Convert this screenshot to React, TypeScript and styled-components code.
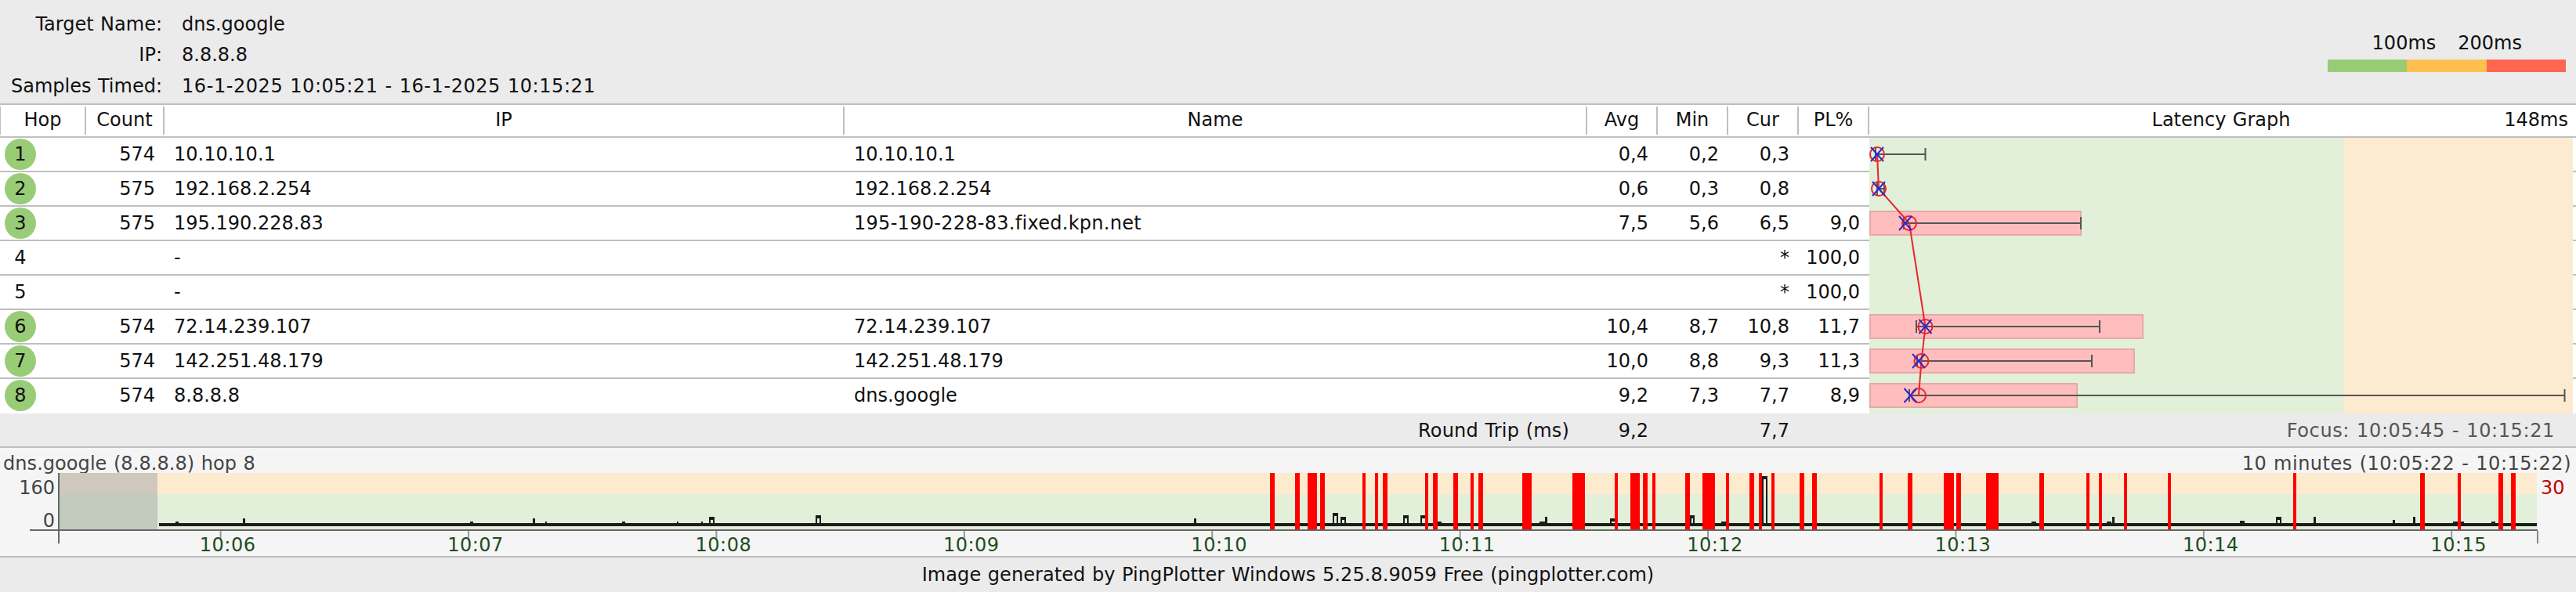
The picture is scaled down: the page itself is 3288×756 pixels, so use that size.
import styled, { createGlobalStyle } from 'styled-components'

const LINE = '#bfbfbf'
const COLUMNS = '110px 100px 868px 948px 90px 90px 90px 90px'

interface Hop {
  hop: number
  count?: string
  ip: string
  name?: string
  avg?: string
  min?: string
  cur?: string
  pl?: string
}

const hops: Hop[] = [
  { hop: 1, count: '574', ip: '10.10.10.1', name: '10.10.10.1', avg: '0,4', min: '0,2', cur: '0,3' },
  { hop: 2, count: '575', ip: '192.168.2.254', name: '192.168.2.254', avg: '0,6', min: '0,3', cur: '0,8' },
  { hop: 3, count: '575', ip: '195.190.228.83', name: '195-190-228-83.fixed.kpn.net', avg: '7,5', min: '5,6', cur: '6,5', pl: '9,0' },
  { hop: 4, ip: '-', cur: '*', pl: '100,0' },
  { hop: 5, ip: '-', cur: '*', pl: '100,0' },
  { hop: 6, count: '574', ip: '72.14.239.107', name: '72.14.239.107', avg: '10,4', min: '8,7', cur: '10,8', pl: '11,7' },
  { hop: 7, count: '574', ip: '142.251.48.179', name: '142.251.48.179', avg: '10,0', min: '8,8', cur: '9,3', pl: '11,3' },
  { hop: 8, count: '574', ip: '8.8.8.8', name: 'dns.google', avg: '9,2', min: '7,3', cur: '7,7', pl: '8,9' },
]

// latency graph marks, page coordinates (viewBox keeps them as measured)
const marks = [
  { y: 197, cur: 2396, avg: 2396, minX: 2394, maxX: 2457.5, barEnd: 0 },
  { y: 241, cur: 2398, avg: 2398, minX: 2396, maxX: 2405, barEnd: 0 },
  { y: 285, cur: 2437, avg: 2432, minX: 2430, maxX: 2656, barEnd: 2656 },
  { y: 417, cur: 2457.5, avg: 2457.5, minX: 2446, maxX: 2680, barEnd: 2735 },
  { y: 461, cur: 2452.5, avg: 2449, minX: 2447, maxX: 2670, barEnd: 2724 },
  { y: 505, cur: 2449, avg: 2438.5, minX: 2437, maxX: 3273.5, barEnd: 2651 },
]

const lossBars = [
  [1621, 1627], [1653, 1659], [1669, 1681], [1685, 1691], [1739, 1743], [1755, 1759], [1765, 1771],
  [1819, 1823], [1829, 1835], [1855, 1861], [1877, 1881], [1887, 1893], [1943, 1955], [2007, 2023],
  [2061, 2065], [2081, 2093], [2097, 2103], [2109, 2113], [2151, 2157], [2173, 2189], [2203, 2207],
  [2233, 2239], [2245, 2249], [2261, 2265], [2297, 2303], [2313, 2319], [2399, 2403], [2435, 2441],
  [2481, 2494], [2497, 2503], [2535, 2551], [2603, 2609], [2663, 2667], [2679, 2683], [2711, 2715],
  [2767, 2771], [2927, 2931], [3089, 3095], [3137, 3141], [3189, 3195], [3205, 3211],
]

// small solid blips on the sample line: x, top, width
const blips = [
  [224, 668, 4], [310, 664, 3], [600, 668, 4], [680, 664, 3], [696, 668, 2], [794, 668, 4], [864, 668, 2],
  [895, 668, 2], [1524, 664, 3], [1835, 668, 5], [1965, 668, 8], [1972, 662, 3], [2197, 668, 6], [2593, 668, 6],
  [2689, 668, 6], [2696, 662, 3], [2859, 667, 6], [2953, 662, 3], [3054, 666, 3], [3080, 662, 3], [3131, 668, 6],
  [3141, 668, 4], [3180, 668, 5],
]

// open samples that rise off the line and come back: x, top, width
const peaks = [
  [906, 662, 5], [1042, 660, 5], [1702, 657, 5], [1712, 662, 5], [1792, 660, 5], [1814, 660, 6], [2056, 664, 6],
  [2158, 660, 4], [2250, 610, 5], [2906, 662, 5],
]

const minuteTicks = [6, 7, 8, 9, 10, 11, 12, 13, 14, 15].map((m, i) => ({
  label: `10:${String(m).padStart(2, '0')}`,
  x: 280.6 + i * 316.4,
}))

const GlobalStyle = createGlobalStyle`
  html, body {
    margin: 0;
    padding: 0;
    background: #ebebeb;
  }
  body {
    font-family: "DejaVu Sans", Verdana, sans-serif;
    font-size: 24px;
    word-spacing: 0.8px;
    color: #111;
  }
`

const Page = styled.div`
  width: 3288px;
  height: 756px;
  display: flex;
  flex-direction: column;
  overflow: hidden;
  background: #ebebeb;
`

const Summary = styled.header`
  height: 132px;
  display: flex;
  justify-content: space-between;
`

const InfoGrid = styled.dl`
  margin: 11px 0 0;
  display: grid;
  grid-template-columns: 207px auto;
  grid-auto-rows: 39.5px;
  column-gap: 25px;
  align-items: center;
  align-content: start;
`

const InfoLabel = styled.dt`
  text-align: right;
  white-space: nowrap;
`

const InfoValue = styled.dd<{ $stamp?: boolean }>`
  margin: 0;
  white-space: nowrap;
  letter-spacing: ${p => (p.$stamp ? '0.56px' : '0')};
`

const Legend = styled.div`
  width: 304px;
  margin: 40px 13px 0 0;
`

const LegendLabels = styled.div`
  display: flex;
  justify-content: flex-end;
  gap: 28px;
  height: 36px;
  padding-right: 56px;
  line-height: 30px;
`

const LegendBar = styled.div`
  display: flex;
  height: 16px;
`

const LegendStep = styled.span<{ $color: string }>`
  flex: 1;
  background: ${p => p.$color};
`

const HeadRow = styled.div`
  height: 40px;
  display: grid;
  grid-template-columns: ${COLUMNS} 1fr;
  align-items: center;
  background: #fff;
  border-top: 2px solid ${LINE};
  border-bottom: 2px solid ${LINE};
`

const HeadCell = styled.div<{ $first?: boolean; $last?: boolean }>`
  position: relative;
  height: 36px;
  line-height: 34px;
  text-align: center;
  border-right: ${p => (p.$last ? 'none' : `2px solid ${LINE}`)};
  border-left: ${p => (p.$first ? `1px solid ${LINE}` : 'none')};
  padding-right: ${p => (p.$last ? '4px' : '0')};
  box-sizing: border-box;
`

const ScaleMax = styled.span`
  position: absolute;
  right: 10px;
  top: 0;
`

const Body = styled.div`
  position: relative;
  height: 352px;
  background: #fff;
`

const Row = styled.div<{ $last?: boolean }>`
  height: 42px;
  display: grid;
  grid-template-columns: ${COLUMNS};
  align-items: center;
  padding-bottom: ${p => (p.$last ? '2px' : '0')};
  border-bottom: ${p => (p.$last ? 'none' : `2px solid ${LINE}`)};
`

const HopCell = styled.div`
  width: 40px;
  height: 40px;
  margin-left: 6px;
  display: flex;
  align-items: center;
  justify-content: center;
`

const HopDot = styled(HopCell)`
  border-radius: 50%;
  background: #99cc77;
`

const Num = styled.div`
  padding-right: 12px;
  text-align: right;
  white-space: nowrap;
`

const Text = styled.div<{ $hyphened?: boolean }>`
  padding-left: 12px;
  white-space: nowrap;
  letter-spacing: ${p => (p.$hyphened ? '0.28px' : '0')};
`

const LatencyChart = styled.svg`
  position: absolute;
  left: 2386px;
  top: 0;
  display: block;
`

const TotalRow = styled.div`
  height: 40px;
  padding-top: 2px;
  display: grid;
  grid-template-columns: 2026px 90px 90px 90px 90px 1fr;
  align-items: center;
  border-bottom: 2px solid ${LINE};
`

const TotalLabel = styled.div`
  padding-right: 23px;
  text-align: right;
  letter-spacing: 0.18px;
`

const Focus = styled.div`
  padding-right: 27px;
  text-align: right;
  color: #555;
  white-space: nowrap;
  letter-spacing: 0.62px;
`

const Timeline = styled.section`
  height: 138px;
  background: #f5f5f5;
  border-bottom: 2px solid ${LINE};
`

const TimelineTitle = styled.div`
  height: 32px;
  box-sizing: border-box;
  padding: 8px 6px 0 4px;
  display: flex;
  justify-content: space-between;
  align-items: center;
  color: #444;
`

const TitleSide = styled.span<{ $spacing?: string }>`
  letter-spacing: ${p => p.$spacing ?? '0'};
  white-space: nowrap;
`

const TimelineChart = styled.svg`
  display: block;
`

const AxisText = styled.text<{ $color?: string }>`
  font-family: "DejaVu Sans", Verdana, sans-serif;
  font-size: 24px;
  fill: ${p => p.$color ?? '#444'};
  dominant-baseline: central;
`

const Footer = styled.footer`
  flex: 1;
  display: flex;
  align-items: center;
  justify-content: center;
  letter-spacing: 0.08px;
`

function LatencyGraph() {
  return (
    <LatencyChart width={902} height={352} viewBox="2386 176 902 352">
      <rect x={2386} y={176} width={605} height={352} fill="#e2efd9" />
      <rect x={2991} y={176} width={293} height={352} fill="#fdebd0" />
      {[218, 262, 306, 350, 394, 438, 482].map(y => (
        <rect key={y} x={3284} y={y} width={4} height={2} fill={LINE} />
      ))}
      {marks.filter(m => m.barEnd > 0).map(m => (
        <rect key={m.y} x={2387} y={m.y - 15} width={m.barEnd - 2387} height={30} fill="#ffbdbd" stroke="#e6a9a9" strokeWidth={2} />
      ))}
      {marks.map(m => (
        <g key={m.y} stroke="#555" strokeWidth={2}>
          <line x1={m.minX} y1={m.y} x2={m.maxX} y2={m.y} />
          <line x1={m.minX} y1={m.y - 8} x2={m.minX} y2={m.y + 8} />
          <line x1={m.maxX} y1={m.y - 8} x2={m.maxX} y2={m.y + 8} />
        </g>
      ))}
      <polyline points={marks.map(m => `${m.cur},${m.y}`).join(' ')} fill="none" stroke="#e8262a" strokeWidth={2} />
      {marks.map(m => (
        <g key={m.y} fill="none">
          <circle cx={m.cur} cy={m.y} r={9} stroke="#e8262a" strokeWidth={2} />
          <path d={`M${m.avg - 8} ${m.y - 9}L${m.avg + 8} ${m.y + 9}M${m.avg + 8} ${m.y - 9}L${m.avg - 8} ${m.y + 9}`} stroke="#2a2acc" strokeWidth={2} />
        </g>
      ))}
    </LatencyChart>
  )
}

function TimelineGraph() {
  return (
    <TimelineChart width={3288} height={106} viewBox="0 606 3288 106">
      <rect x={75} y={606} width={3163} height={27} fill="#fdebd0" />
      <rect x={75} y={633} width={3163} height={45} fill="#e2efd9" />
      <rect x={75} y={606} width={126} height={27} fill="#cfc8bd" />
      <rect x={75} y={633} width={126} height={45} fill="#c3cbbf" />
      <rect x={203} y={670} width={3035} height={4} fill="#1c1c1c" />
      {blips.map(([x, top, w]) => (
        <rect key={x} x={x} y={top} width={w} height={670 - top} fill="#1c1c1c" />
      ))}
      {peaks.map(([x, top, w]) => (
        <g key={x}>
          <path d={`M${x} 671V${top + 1}H${x + w}V671`} fill="none" stroke="#1c1c1c" strokeWidth={2} />
          <rect x={x - 1} y={top} width={w + 2} height={4} fill="#1c1c1c" />
        </g>
      ))}
      {lossBars.map(([a, b]) => (
        <rect key={a} x={a} y={606} width={b - a} height={72} fill="#ff0000" />
      ))}
      <rect x={38} y={678} width={3201} height={2} fill="#666" />
      <rect x={74} y={606} width={2} height={90} fill="#666" />
      <rect x={3238} y={680} width={2} height={16} fill="#888" />
      {minuteTicks.map(t => (
        <g key={t.label}>
          <rect x={t.x} y={680} width={2} height={9} fill="#999" />
          <AxisText x={t.x + 10} y={698} textAnchor="middle" $color="#1e4d1e" letterSpacing={0.5}>{t.label}</AxisText>
        </g>
      ))}
      <AxisText x={70} y={625} textAnchor="end">160</AxisText>
      <AxisText x={70} y={667} textAnchor="end">0</AxisText>
      <AxisText x={3243} y={625} $color="#c00000">30</AxisText>
    </TimelineChart>
  )
}

export default function App() {
  return (
    <Page>
      <GlobalStyle />
      <Summary>
        <InfoGrid>
          <InfoLabel>Target Name:</InfoLabel>
          <InfoValue>dns.google</InfoValue>
          <InfoLabel>IP:</InfoLabel>
          <InfoValue>8.8.8.8</InfoValue>
          <InfoLabel>Samples Timed:</InfoLabel>
          <InfoValue $stamp>16-1-2025 10:05:21 - 16-1-2025 10:15:21</InfoValue>
        </InfoGrid>
        <Legend>
          <LegendLabels>
            <span>100ms</span>
            <span>200ms</span>
          </LegendLabels>
          <LegendBar>
            <LegendStep $color="#99cc77" />
            <LegendStep $color="#ffc050" />
            <LegendStep $color="#ff6650" />
          </LegendBar>
        </Legend>
      </Summary>

      <HeadRow>
        <HeadCell $first>Hop</HeadCell>
        <HeadCell>Count</HeadCell>
        <HeadCell>IP</HeadCell>
        <HeadCell>Name</HeadCell>
        <HeadCell>Avg</HeadCell>
        <HeadCell>Min</HeadCell>
        <HeadCell>Cur</HeadCell>
        <HeadCell>PL%</HeadCell>
        <HeadCell $last>
          Latency Graph
          <ScaleMax>148ms</ScaleMax>
        </HeadCell>
      </HeadRow>

      <Body>
        {hops.map((h, i) => (
          <Row key={h.hop} $last={i === hops.length - 1}>
            {h.count ? <HopDot>{h.hop}</HopDot> : <HopCell>{h.hop}</HopCell>}
            <Num>{h.count}</Num>
            <Text>{h.ip}</Text>
            <Text $hyphened={h.name?.includes('-')}>{h.name}</Text>
            <Num>{h.avg}</Num>
            <Num>{h.min}</Num>
            <Num>{h.cur}</Num>
            <Num>{h.pl}</Num>
          </Row>
        ))}
        <LatencyGraph />
      </Body>

      <TotalRow>
        <TotalLabel>Round Trip (ms)</TotalLabel>
        <Num>9,2</Num>
        <Num />
        <Num>7,7</Num>
        <Num />
        <Focus>Focus: 10:05:45 - 10:15:21</Focus>
      </TotalRow>

      <Timeline>
        <TimelineTitle>
          <TitleSide $spacing="0.06px">dns.google (8.8.8.8) hop 8</TitleSide>
          <TitleSide $spacing="0.5px">10 minutes (10:05:22 - 10:15:22)</TitleSide>
        </TimelineTitle>
        <TimelineGraph />
      </Timeline>

      <Footer>Image generated by PingPlotter Windows 5.25.8.9059 Free (pingplotter.com)</Footer>
    </Page>
  )
}
